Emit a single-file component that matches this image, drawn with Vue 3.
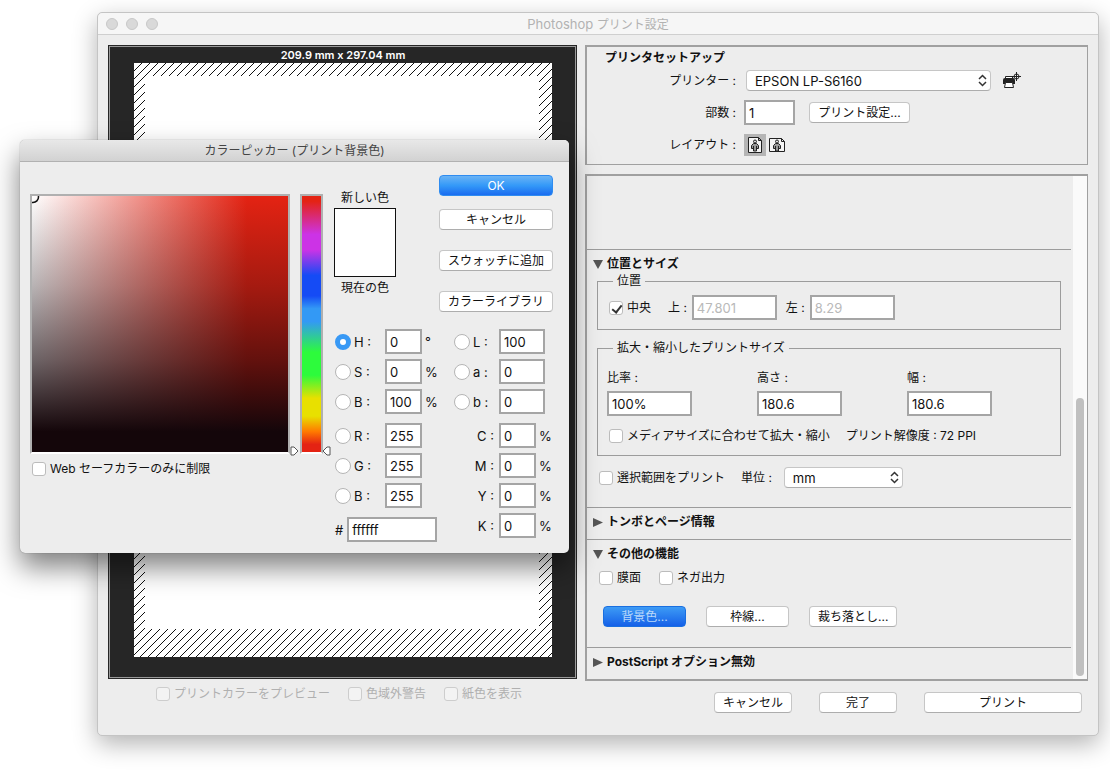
<template>
  <div class="desktop">
    <section class="window">
      <header class="window-bar">
        <span class="lights"><i></i><i></i><i></i></span>
        <h1><span>Photoshop</span> プリント設定</h1>
      </header>

      <div class="window-body">
        <div class="preview">
          <p class="paper-size">209.9 mm x 297.04 mm</p>
          <div class="paper">
            <svg class="hatch" width="100%" height="100%">
              <defs>
                <pattern id="hatch" width="8" height="8" patternUnits="userSpaceOnUse">
                  <path d="M-1 9L9 -1M-1 1L1 -1M7 9L9 7" stroke="#111" stroke-width="1" />
                </pattern>
              </defs>
              <rect width="100%" height="100%" fill="url(#hatch)" />
            </svg>
            <div class="printable"></div>
          </div>
        </div>

        <div class="side">
          <div class="panel setup">
            <h2>プリンタセットアップ</h2>
            <div class="setup-row printer-row">
              <label class="setup-label" for="printer">プリンター :</label>
              <span class="select printer-select">
                <select id="printer" v-model="printer">
                  <option>EPSON LP-S6160</option>
                </select>
                <svg width="9" height="13" viewBox="0 0 9 13"><path d="M1 5L4.5 1.5L8 5M1 8L4.500 11.500L8 8" /></svg>
              </span>
              <svg class="printer-icon" width="19" height="17" viewBox="0 0 19 17">
                <path d="M2.500 7V4.500H9.500V7" fill="#fff" stroke="#222" />
                <path d="M0 8Q0 6 2 6H10Q12 6 12 8V12H0Z" fill="#222" />
                <path d="M2.500 10.500H9.500L10.500 15.500H1.500Z" fill="#fff" stroke="#222" />
                <circle cx="13.500" cy="4.500" r="2.500" fill="#ededed" stroke="#222" />
                <path d="M13.500 0V9M9 4.500H18" stroke="#222" />
              </svg>
            </div>
            <div class="setup-row copies-row">
              <label class="setup-label" for="copies">部数 :</label>
              <input id="copies" v-model="copies" class="field copies" type="text">
              <button class="btn settings-btn">プリント設定...</button>
            </div>
            <div class="setup-row layout-row">
              <span class="setup-label">レイアウト :</span>
              <button
                v-for="o in ['portrait', 'landscape']"
                :key="o"
                class="orient"
                :class="{ active: orientation === o }"
                :aria-label="o"
                @click="orientation = o"
              >
                <svg width="16" height="16" viewBox="0 0 16 16">
                  <path v-if="o === 'portrait'" d="M1.500 .5H11.500L14.500 3.500V15.500H1.500ZM11.500 .5V3.500H14.500" fill="#f4f4f4" stroke="#222" />
                  <path v-else d="M.5 1.500H12.500L15.500 4.500V14.500H.5ZM12.500 1.500V4.500H15.500" fill="#f4f4f4" stroke="#222" />
                  <circle cx="8" cy="4.500" r="1.500" fill="#ddd" stroke="#222" />
                  <path d="M6.500 6.500H9.500L11.500 8.500V11.500H9.500V14H6.500V11.500H4.500V8.500Z" fill="#999" stroke="#222" />
                  <path d="M6.500 9V12M9.500 9V12" stroke="#222" />
                </svg>
              </button>
            </div>
          </div>

          <div class="panel options">
            <div class="scroll-content">
              <div class="scrolled-out"></div>

              <section class="group position-group">
                <h3><svg width="10" height="9"><path d="M0 0H10L5 9Z" /></svg>位置とサイズ</h3>
                <fieldset class="position-set">
                  <legend>位置</legend>
                  <label class="check"><input v-model="centered" type="checkbox">中央</label>
                  <label class="coord">上 :<input class="field size" type="text" value="47.801" :disabled="centered"></label>
                  <label class="coord">左 :<input class="field size" type="text" value="8.29" :disabled="centered"></label>
                </fieldset>
                <fieldset class="scale-set">
                  <legend>拡大・縮小したプリントサイズ</legend>
                  <div class="scale-fields">
                    <label v-for="s in scale" :key="s.name">
                      {{ s.name }} :
                      <input v-model="s.value" class="field size" type="text">
                    </label>
                  </div>
                  <div class="scale-fit">
                    <label class="check"><input type="checkbox">メディアサイズに合わせて拡大・縮小</label>
                    <span>プリント解像度 : 72 PPI</span>
                  </div>
                </fieldset>
                <div class="unit-row">
                  <label class="check"><input type="checkbox">選択範囲をプリント</label>
                  <label for="unit">単位 :</label>
                  <span class="select unit-select">
                    <select id="unit" v-model="unit">
                      <option>mm</option>
                    </select>
                    <svg width="9" height="13" viewBox="0 0 9 13"><path d="M1 5L4.500 1.500L8 5M1 8L4.500 11.500L8 8" /></svg>
                  </span>
                </div>
              </section>

              <section class="group">
                <h3><svg width="10" height="9"><path d="M0 0L10 4.500L0 9Z" /></svg>トンボとページ情報</h3>
              </section>

              <section class="group other-group">
                <h3><svg width="10" height="9"><path d="M0 0H10L5 9Z" /></svg>その他の機能</h3>
                <div class="other-checks">
                  <label class="check"><input type="checkbox">膜面</label>
                  <label class="check"><input type="checkbox">ネガ出力</label>
                </div>
                <div class="other-buttons">
                  <button class="btn pressed">背景色...</button>
                  <button class="btn">枠線...</button>
                  <button class="btn">裁ち落とし...</button>
                </div>
              </section>

              <section class="group">
                <h3><svg width="10" height="9"><path d="M0 0L10 4.500L0 9Z" /></svg>PostScript オプション無効</h3>
              </section>
            </div>
            <div class="track"><div class="thumb"></div></div>
          </div>
        </div>

        <div class="preview-checks">
          <label v-for="c in previewChecks" :key="c" class="check"><input type="checkbox" disabled>{{ c }}</label>
        </div>

        <footer class="actions">
          <button class="btn">キャンセル</button>
          <button class="btn">完了</button>
          <button class="btn print">プリント</button>
        </footer>
      </div>
    </section>

    <section class="dialog">
      <header class="dialog-bar">カラーピッカー (プリント背景色)</header>
      <div class="dialog-body">
        <div class="picker">
          <div class="picker-row">
            <div class="color-field">
              <svg width="8" height="8"><circle cx="1" cy="1" r="5.500" fill="none" stroke="#111" stroke-width="1.500" /></svg>
            </div>
            <div class="hue">
              <input v-model="hue" class="hue-range" type="range" min="0" max="360" aria-label="H">
              <svg class="marker left" width="9" height="10"><path d="M1 1H4L8 5L4 9H1Z" /></svg>
              <svg class="marker right" width="9" height="10"><path d="M8 1H5L1 5L5 9H8Z" /></svg>
            </div>
          </div>
          <label class="check"><input type="checkbox">Web セーフカラーのみに制限</label>
        </div>

        <div class="controls">
          <div class="controls-top">
            <div class="compare">
              <span>新しい色</span>
              <div class="swatch"></div>
              <span>現在の色</span>
            </div>
            <div class="dialog-buttons">
              <button class="btn primary">OK</button>
              <button class="btn">キャンセル</button>
              <button class="btn spaced">スウォッチに追加</button>
              <button class="btn spaced">カラーライブラリ</button>
            </div>
          </div>

          <div class="channels">
            <div class="channel-col">
              <div v-for="(group, g) in leftGroups" :key="g" class="channel-group">
                <div v-for="c in group" :key="c.id" class="channel">
                  <input :id="c.id" v-model="selected" type="radio" name="channel" :value="c.id">
                  <label :id="c.id + '-label'" :for="c.id">{{ c.name }} :</label>
                  <input v-model="c.value" class="field narrow" type="text" :aria-labelledby="c.id + '-label'">
                  <span class="unit">{{ c.unit }}</span>
                </div>
              </div>
              <label class="hex"># <input v-model="hex" class="field" type="text"></label>
            </div>

            <div class="channel-col lab-col">
              <div class="channel-group">
                <div v-for="c in lab" :key="c.id" class="channel">
                  <input :id="c.id" v-model="selected" type="radio" name="channel" :value="c.id">
                  <label :id="c.id + '-label'" :for="c.id">{{ c.name }} :</label>
                  <input v-model="c.value" class="field wide" type="text" :aria-labelledby="c.id + '-label'">
                </div>
              </div>
              <div class="channel-group">
                <div v-for="c in cmyk" :key="c.id" class="channel ink">
                  <label :for="c.id">{{ c.name }} :</label>
                  <input :id="c.id" v-model="c.value" class="field narrow" type="text">
                  <span class="unit">%</span>
                </div>
              </div>
            </div>
          </div>
        </div>
      </div>
    </section>
  </div>
</template>

<script setup>
import { ref } from 'vue';

const printer = ref('EPSON LP-S6160');
const copies = ref('1');
const orientation = ref('portrait');
const centered = ref(true);
const unit = ref('mm');
const hue = ref(0);
const hex = ref('ffffff');
const selected = ref('hsb-h');

const scale = ref([
  { name: '比率', value: '100%' },
  { name: '高さ', value: '180.6' },
  { name: '幅', value: '180.6' },
]);

const previewChecks = ['プリントカラーをプレビュー', '色域外警告', '紙色を表示'];

const leftGroups = ref([
  [
    { id: 'hsb-h', name: 'H', value: '0', unit: '°' },
    { id: 'hsb-s', name: 'S', value: '0', unit: '%' },
    { id: 'hsb-b', name: 'B', value: '100', unit: '%' },
  ],
  [
    { id: 'rgb-r', name: 'R', value: '255' },
    { id: 'rgb-g', name: 'G', value: '255' },
    { id: 'rgb-b', name: 'B', value: '255' },
  ],
]);

const lab = ref([
  { id: 'lab-l', name: 'L', value: '100' },
  { id: 'lab-a', name: 'a', value: '0' },
  { id: 'lab-b', name: 'b', value: '0' },
]);

const cmyk = ref(['C', 'M', 'Y', 'K'].map((name) => ({ id: 'ink-' + name, name, value: '0' })));
</script>

<style>
body {
  margin: 0;
  background: #fff;
}
</style>

<style scoped>
* {
  box-sizing: border-box;
}

.desktop {
  position: relative;
  overflow: hidden;
  min-height: 100vh;
  padding: 12px 11px 35px 97px;
  font: 12px/18px Inter, "Noto Sans CJK JP", sans-serif;
  color: #111;
}

h1, h2, h3, p, fieldset, legend {
  margin: 0;
  padding: 0;
  font-size: 12px;
}

input, select, button {
  margin: 0;
  font-family: inherit;
  color: inherit;
}

/* メインウィンドウ */
.window {
  border: 1px solid #c4c4c4;
  border-radius: 5px;
  background: #ededed;
  box-shadow: 0 8px 24px rgba(0, 0, 0, 0.3);
}

.window-bar {
  position: relative;
  height: 22px;
  border-bottom: 1px solid #cfcfcf;
  border-radius: 5px 5px 0 0;
  background: #f6f6f6;
  text-align: center;
}

.window-bar h1 {
  line-height: 22px;
  font-weight: 400;
  color: #b2b2b2;
}

.window-bar h1 span {
  font-size: 13px;
}

.lights {
  position: absolute;
  top: 5px;
  left: 8px;
  display: flex;
  gap: 8px;
}

.lights i {
  width: 12px;
  height: 12px;
  border: 1px solid #c8c8c8;
  border-radius: 50%;
  background: #d9d9d9;
}

.window-body {
  display: grid;
  grid-template-columns: minmax(0, 469fr) minmax(0, 503fr);
  column-gap: 8px;
  padding: 10px 10px 22px;
}

.preview {
  display: flex;
  flex-direction: column;
  margin-bottom: 2px;
  padding: 0 24px 21px 25px;
  border: 1px solid #262626;
  outline: 1px solid #9a9a9a;
  outline-offset: -2px;
  background: #262626;
}

.paper-size {
  padding-top: 1px;
  line-height: 16px;
  text-align: center;
  font-size: 11px;
  font-weight: 600;
  color: #fff;
}

.paper {
  flex: 1;
  display: flex;
  position: relative;
  padding: 13px 13px 28px 11px;
  background: #fff;
}

.hatch {
  position: absolute;
  inset: 0;
}

.printable {
  position: relative;
  flex: 1;
  background: #fff;
}

.side {
  display: flex;
  flex-direction: column;
  gap: 9px;
}

.panel {
  border: 2px solid #a0a0a0;
  border-right-width: 1px;
}

.setup {
  height: 120px;
  border-bottom-width: 1px;
}

.setup h2 {
  padding: 2px 18px 0;
  font-weight: 700;
}

.setup-row {
  display: flex;
  align-items: center;
}

.setup-label {
  width: 149px;
  margin-right: 8px;
  text-align: right;
}

.printer-row {
  margin-top: 3px;
}

.copies-row {
  margin-top: 9px;
}

.layout-row {
  margin-top: 9px;
}

.select {
  position: relative;
  display: inline-flex;
}

.select select {
  width: 100%;
  height: 21px;
  padding: 0 8px;
  appearance: none;
  border: 1px solid #c6c6c6;
  border-bottom-color: #adadad;
  border-radius: 4px;
  background: #fff;
  font-size: 13px;
}

.select svg {
  position: absolute;
  top: 4px;
  right: 4px;
  fill: none;
  stroke: #333;
  stroke-width: 1.5;
  pointer-events: none;
}

.printer-select {
  width: 245px;
  margin-left: 2px;
}

.printer-icon {
  margin-left: 12px;
}

.field {
  height: 25px;
  padding: 0 3px;
  border: 2px solid #a5a5a5;
  border-radius: 0;
  background: #fff;
  font-size: 13px;
}

.field:disabled {
  color: #b9b9b9;
}

.copies {
  width: 51px;
}

.btn {
  height: 21px;
  padding: 0;
  border: 1px solid #c6c6c6;
  border-bottom-color: #adadad;
  border-radius: 4px;
  background: #fff;
  font-size: 12px;
  line-height: 18px;
}

.settings-btn {
  width: 101px;
  margin-left: 14px;
}

.orient {
  display: grid;
  place-items: center;
  width: 22px;
  height: 22px;
  padding: 0;
  border: 0;
  background: none;
}

.orient.active {
  background: #b5b5b5;
}

.options {
  display: flex;
}

.scroll-content {
  flex: 1;
  padding-right: 2px;
}

.scrolled-out {
  height: 73px;
}

.track {
  display: flex;
  align-items: flex-end;
  width: 14px;
  padding: 3px;
  background: #fafafa;
}

.thumb {
  width: 8px;
  height: 56%;
  border-radius: 4px;
  background: #c0c0c0;
}

.group {
  padding: 3px 10px 6px;
  border-top: 1px solid #9c9c9c;
}

.group h3 {
  display: flex;
  align-items: center;
  gap: 4px;
  height: 22px;
  margin-left: -4px;
  font-weight: 700;
}

.group h3 svg {
  fill: #555;
}

fieldset {
  min-width: 0;
  border: 1px solid #9c9c9c;
}

legend {
  margin-left: 4px;
  padding: 0 4px;
  line-height: 14px;
}

.check {
  display: inline-flex;
  align-items: center;
  gap: 4px;
  white-space: nowrap;
}

.check input {
  position: relative;
  width: 14px;
  height: 14px;
  appearance: none;
  border: 1px solid #bcbcbc;
  border-radius: 3px;
  background: #fff;
}

.check input:checked::after {
  content: "";
  position: absolute;
  top: 1px;
  left: 4px;
  width: 4px;
  height: 8px;
  border: solid #333;
  border-width: 0 2px 2px 0;
  transform: rotate(38deg);
}

.position-group {
  padding-bottom: 19px;
}

.position-set {
  display: flex;
  align-items: center;
  margin-top: -1px;
  padding: 7px 11px 9px;
}

.coord {
  display: flex;
  align-items: center;
  gap: 5px;
  margin-left: 17px;
}

.coord + .coord {
  margin-left: 9px;
}

.size {
  width: 85px;
}

.scale-set {
  margin-top: 11px;
  padding: 14px 11px 10px;
}

.scale-fields {
  display: flex;
  gap: 65px;
  margin-left: -2px;
}

.scale-fields label {
  display: flex;
  flex-direction: column;
  gap: 4px;
}

.scale-fit {
  display: flex;
  gap: 16px;
  height: 18px;
  margin-top: 11px;
  white-space: nowrap;
}

.unit-row {
  display: flex;
  align-items: center;
  gap: 16px;
  margin: 11px 0 0 2px;
}

.unit-select {
  width: 119px;
  margin-left: -4px;
}

.other-group {
  padding-bottom: 20px;
}

.other-checks {
  display: flex;
  gap: 18px;
  margin: 4px 0 0 2px;
  height: 18px;
}

.other-buttons {
  display: flex;
  gap: 20px;
  margin: 19px 0 0 6px;
}

.other-buttons .btn {
  min-width: 83px;
  padding: 0 8px;
}

.btn.pressed {
  border-color: #1a6fe0;
  background: linear-gradient(#3d9bf5, #1560e8);
  color: #b9d8fa;
}

.btn.primary {
  border-color: #2f8cf0;
  background: linear-gradient(#6ab3f5, #3499f8 50%, #1a6cf0);
  color: #fff;
}

.preview-checks {
  display: flex;
  gap: 18px;
  height: 18px;
  margin: 4px 0 0 48px;
  color: #b0b0b0;
}

.preview-checks input {
  background: #f3f3f3;
  border-color: #cdcdcd;
}

.actions {
  display: flex;
  justify-content: flex-end;
  gap: 27px;
  padding: 11px 6px 0 0;
}

.actions .btn {
  width: 78px;
}

.actions .print {
  width: 158px;
}

/* カラーピッカー */
.dialog {
  position: absolute;
  top: 140px;
  left: 20px;
  border-radius: 5px;
  background: #ededed;
  box-shadow: 0 0 1px rgba(0, 0, 0, 0.5), 0 14px 28px rgba(0, 0, 0, 0.5);
}

.dialog-bar {
  height: 22px;
  border-bottom: 1px solid #b1b1b1;
  border-radius: 5px 5px 0 0;
  background: linear-gradient(#e8e8e8, #d2d2d2);
  line-height: 22px;
  text-align: center;
  color: #444;
}

.dialog-body {
  display: flex;
  gap: 11px;
  padding: 13px 16px 11px 10px;
}

.picker {
  padding-top: 19px;
}

.picker-row {
  display: flex;
  gap: 10px;
}

.color-field {
  width: 260px;
  height: 260px;
  border: 2px solid #b0b0b0;
  border-bottom-color: #fff;
  background:
    linear-gradient(to top, #14060a 8%, rgba(20, 6, 10, 0.62) 36%, rgba(20, 6, 10, 0.3) 65%, transparent),
    linear-gradient(to right, #fff, #e42313 84%);
}

.color-field svg {
  display: block;
}

.hue {
  position: relative;
  width: 23px;
  height: 260px;
  border: 2px solid #b0b0b0;
  border-bottom-color: #fff;
}

.hue-range {
  display: block;
  width: 19px;
  height: 256px;
  appearance: none;
  writing-mode: vertical-lr;
  direction: rtl;
  background: linear-gradient(
    #e42313 2%, #cc33e6 15%, #cc33e6 21%, #154bf5 31%, #154bf5 39%,
    #3399f5 44%, #3399f5 49%, #2dfb3c 61%, #2dfb3c 70%, #e8e000 79%,
    #e8e000 86%, #ff7a00 92%, #e42313 97%
  );
}

.hue-range::-webkit-slider-thumb {
  appearance: none;
  width: 19px;
  height: 1px;
  background: transparent;
}

.marker {
  position: absolute;
  bottom: -4px;
  fill: #fff;
  stroke: #555;
}

.marker.left {
  left: -12px;
}

.marker.right {
  right: -10px;
}

.picker .check {
  margin: 6px 0 0 2px;
}

.controls-top {
  display: flex;
  justify-content: space-between;
}

.compare {
  display: flex;
  flex-direction: column;
  align-items: center;
  padding-top: 14px;
}

.swatch {
  width: 62px;
  height: 69px;
  margin: 1px 0 2px;
  border: 1px solid #111;
  background: #fff;
}

.dialog-buttons {
  display: flex;
  flex-direction: column;
  gap: 13px;
}

.dialog-buttons .btn {
  width: 114px;
}

.spaced {
  margin-top: 7px;
}

.channels {
  display: flex;
  margin-top: 17px;
  font-size: 13px;
}

.channel-col {
  display: flex;
  flex-direction: column;
  gap: 9px;
  width: 120px;
  padding-left: 1px;
}

.lab-col {
  width: 99px;
  padding-left: 0;
}

.channel-group {
  display: flex;
  flex-direction: column;
  gap: 5px;
}

.channel {
  display: flex;
  align-items: center;
}

.channel input[type="radio"] {
  flex: none;
  width: 16px;
  height: 16px;
  margin-right: 3px;
  appearance: none;
  border: 1px solid #b5b5b5;
  border-radius: 50%;
  background: #fff;
}

.channel input[type="radio"]:checked {
  border: 5px solid #3899f5;
}

.channel label {
  flex: none;
  width: 31px;
}

.lab-col .channel label {
  width: 26px;
}

.lab-col .ink label {
  width: 45px;
  padding-right: 5px;
  text-align: right;
}

.narrow {
  width: 37px;
}

.wide {
  width: 46px;
}

.unit {
  margin-left: 3px;
}

.hex {
  display: flex;
  align-items: center;
  gap: 4px;
}

.hex .field {
  width: 90px;
}
</style>
